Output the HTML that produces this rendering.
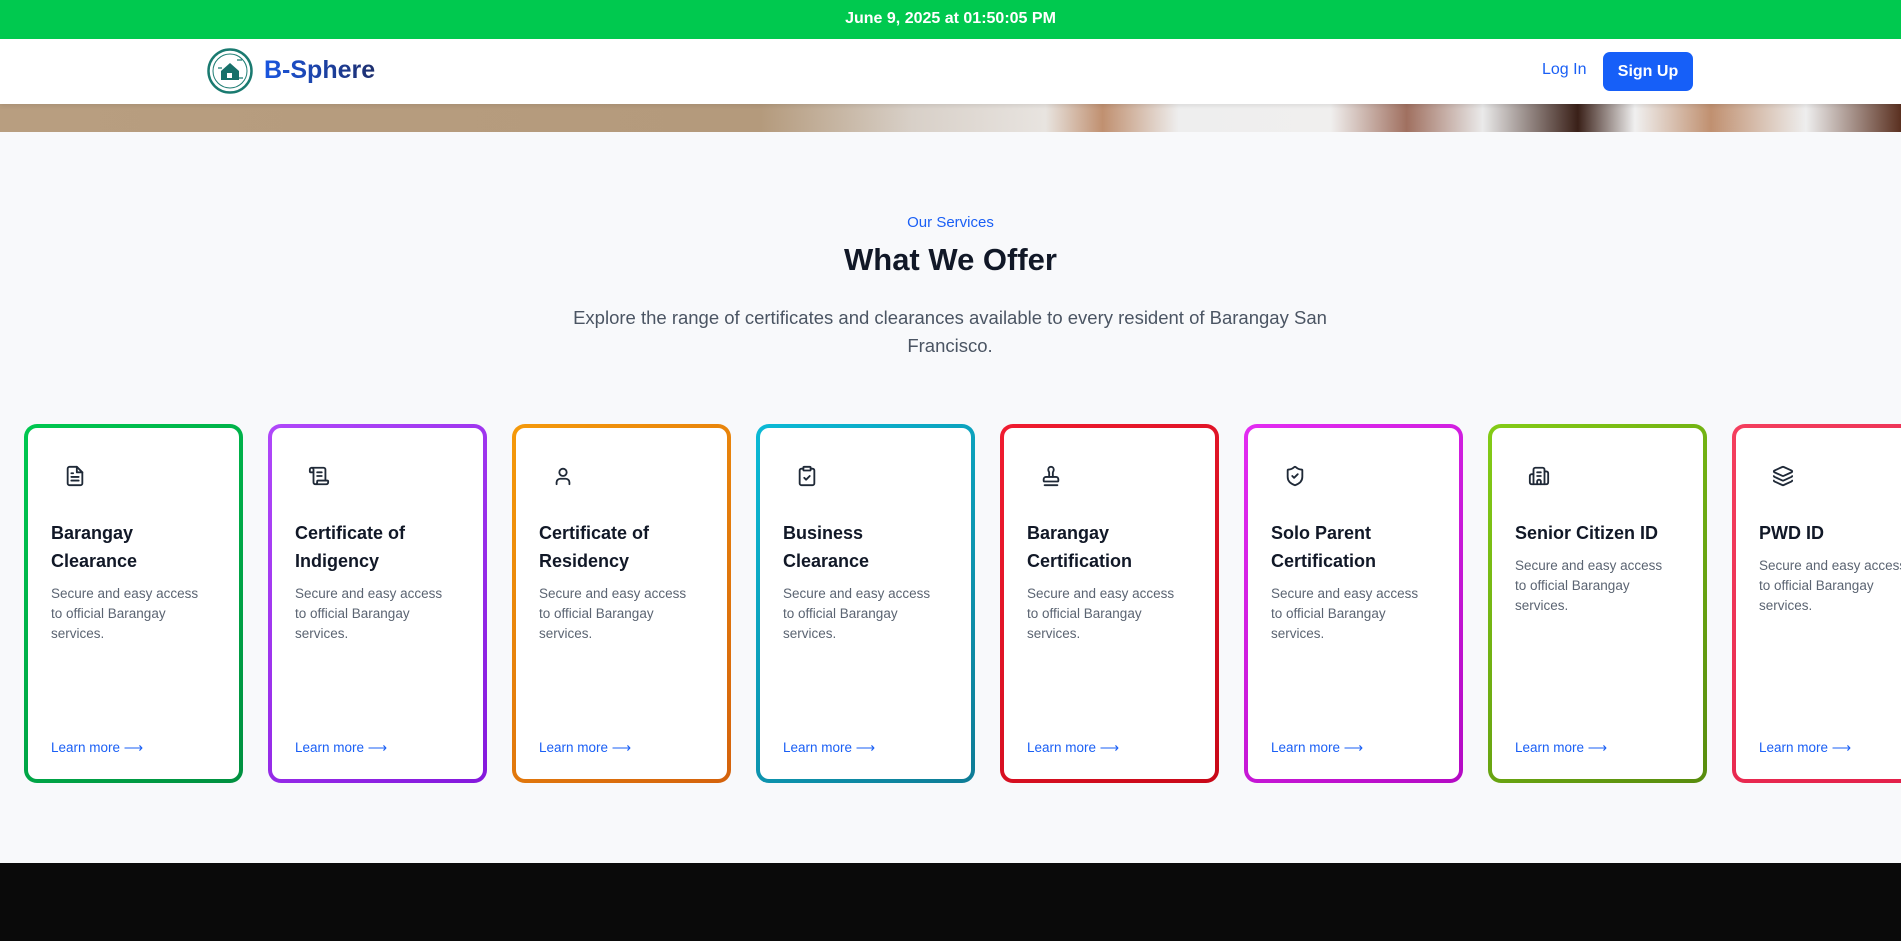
<!DOCTYPE html>
<html><head><meta charset="utf-8"><style>
*{margin:0;padding:0;box-sizing:border-box}
body{width:1901px;height:941px;overflow:hidden;font-family:"Liberation Sans",sans-serif;background:#f8f9fb;position:relative}
.top{position:absolute;left:0;top:0;width:1901px;height:39px;background:#00c94f;color:#fff;font-size:16px;font-weight:bold;text-align:center;line-height:37px}
.hdr{position:absolute;left:0;top:39px;width:1901px;height:65px;background:#fff;box-shadow:0 2px 4px rgba(0,0,0,.08);z-index:2}
.logo{position:absolute;left:207px;top:9px;width:46px;height:46px}
.brand{position:absolute;left:264px;top:17px;font-size:25px;font-weight:bold;background:linear-gradient(90deg,#1a56e0,#1e2f6e);-webkit-background-clip:text;color:transparent}
.login{position:absolute;left:1542px;top:22px;font-size:16px;color:#1a5ff5}
.sign{position:absolute;left:1603px;top:13px;width:90px;height:39px;background:#165ff8;border-radius:7px;color:#fff;font-weight:bold;font-size:16px;text-align:center;line-height:39px}
.hero{position:absolute;left:0;top:104px;width:1901px;height:28px;background:linear-gradient(90deg,#b89e80 0%,#b49a7c 40%,#d8d0c8 48%,#e8e4e0 55%,#c09070 58%,#eee 62%,#f0efee 70%,#a07060 74%,#eaeaea 78%,#3a2018 83%,#f0f0f0 86%,#c09070 90%,#eee 95%,#5a3020 100%)}
.sub{position:absolute;top:214px;width:100%;text-align:center;color:#1a5ff5;font-size:15px}
h1{position:absolute;top:242px;width:100%;text-align:center;font-size:31px;color:#111827}
.p{position:absolute;left:555px;top:304px;width:790px;text-align:center;font-size:18.5px;line-height:28px;color:#4b5563}
.card{position:absolute;top:424px;width:219px;height:359px;border-radius:13px;padding:4px}
.in{width:100%;height:100%;background:#fff;border-radius:9px;position:relative}
.in svg{position:absolute;left:36px;top:37px}
.t{position:absolute;left:23px;top:91px;width:160px;font-size:18px;font-weight:bold;color:#111827;line-height:28px}
.d{position:absolute;left:23px;width:158px;font-size:13.5px;color:#5b6472;line-height:20px}
.l{position:absolute;left:23px;top:312px;font-size:13.5px;color:#1a5ff5}
.foot{position:absolute;left:0;top:863px;width:1901px;height:78px;background:#0a0a0a}
</style></head><body>
<div class="top">June 9, 2025 at 01:50:05 PM</div>
<div class="hdr">
<svg class="logo" viewBox="0 0 46 46"><circle cx="23" cy="23" r="21.5" fill="none" stroke="#1a7a70" stroke-width="2.5"/><circle cx="23" cy="23" r="17" fill="none" stroke="#1a7a70" stroke-width="1"/><path d="M14 23l9-8 9 8v9H14z" fill="#17706a"/><rect x="20" y="25" width="5" height="5" fill="#fff"/><path d="M30 12h5M11 20h4M32 30h4" stroke="#1a7a70" stroke-width="1.2"/></svg>
<div class="brand">B-Sphere</div>
<div class="login">Log In</div>
<div class="sign">Sign Up</div>
</div>
<div class="hero"></div>
<div class="sub">Our Services</div>
<h1>What We Offer</h1>
<div class="p">Explore the range of certificates and clearances available to every resident of Barangay San Francisco.</div>

<div class="card" style="left:24px;background:linear-gradient(135deg,#00c850,#009040)"><div class="in">
<svg width="22" height="22" viewBox="0 0 24 24" fill="none" stroke="#1f2937" stroke-width="2" stroke-linecap="round" stroke-linejoin="round"><path d="M14 2H6a2 2 0 0 0-2 2v16a2 2 0 0 0 2 2h12a2 2 0 0 0 2-2V8z"/><path d="M14 2v6h6M16 13H8M16 17H8M10 9H8"/></svg>
<div class="t">Barangay Clearance</div><div class="d" style="top:156px">Secure and easy access to official Barangay services.</div><div class="l">Learn more ⟶</div></div></div>

<div class="card" style="left:268px;background:linear-gradient(135deg,#b048fa,#8418dc)"><div class="in">
<svg width="22" height="22" viewBox="0 0 24 24" fill="none" stroke="#1f2937" stroke-width="2" stroke-linecap="round" stroke-linejoin="round"><path d="M15 12h-5M15 8h-5M19 17V5a2 2 0 0 0-2-2H4"/><path d="M8 21h12a2 2 0 0 0 2-2v-1a1 1 0 0 0-1-1H11a1 1 0 0 0-1 1v1a2 2 0 1 1-4 0V5a2 2 0 1 0-4 0v2a1 1 0 0 0 1 1h3"/></svg>
<div class="t">Certificate of Indigency</div><div class="d" style="top:156px">Secure and easy access to official Barangay services.</div><div class="l">Learn more ⟶</div></div></div>

<div class="card" style="left:512px;background:linear-gradient(135deg,#f59a0b,#d4620c)"><div class="in">
<svg width="22" height="22" viewBox="0 0 24 24" fill="none" stroke="#1f2937" stroke-width="2" stroke-linecap="round" stroke-linejoin="round"><circle cx="12" cy="8" r="4"/><path d="M19 21v-2a4 4 0 0 0-4-4H9a4 4 0 0 0-4 4v2"/></svg>
<div class="t">Certificate of Residency</div><div class="d" style="top:156px">Secure and easy access to official Barangay services.</div><div class="l">Learn more ⟶</div></div></div>

<div class="card" style="left:756px;background:linear-gradient(135deg,#0bbad6,#0e7c96)"><div class="in">
<svg width="22" height="22" viewBox="0 0 24 24" fill="none" stroke="#1f2937" stroke-width="2" stroke-linecap="round" stroke-linejoin="round"><rect x="8" y="2" width="8" height="4" rx="1"/><path d="M16 4h2a2 2 0 0 1 2 2v14a2 2 0 0 1-2 2H6a2 2 0 0 1-2-2V6a2 2 0 0 1 2-2h2"/><path d="M9 14l2 2 4-4"/></svg>
<div class="t">Business Clearance</div><div class="d" style="top:156px">Secure and easy access to official Barangay services.</div><div class="l">Learn more ⟶</div></div></div>

<div class="card" style="left:1000px;background:linear-gradient(135deg,#f01c30,#c80818)"><div class="in">
<svg width="22" height="22" viewBox="0 0 24 24" fill="none" stroke="#1f2937" stroke-width="2" stroke-linecap="round" stroke-linejoin="round"><path d="M5 22h14M19.27 13.73A2.5 2.5 0 0 0 17.5 13h-11A2.5 2.5 0 0 0 4 15.5V17a1 1 0 0 0 1 1h14a1 1 0 0 0 1-1v-1.5c0-.66-.26-1.3-.73-1.77"/><path d="M14 13V8.5C14 7 15 7 15 5a3 3 0 0 0-6 0c0 2 1 2 1 3.5V13"/></svg>
<div class="t">Barangay Certification</div><div class="d" style="top:156px">Secure and easy access to official Barangay services.</div><div class="l">Learn more ⟶</div></div></div>

<div class="card" style="left:1244px;background:linear-gradient(135deg,#e32cf2,#b40ac4)"><div class="in">
<svg width="22" height="22" viewBox="0 0 24 24" fill="none" stroke="#1f2937" stroke-width="2" stroke-linecap="round" stroke-linejoin="round"><path d="M20 13c0 5-3.5 7.5-7.66 8.95a1 1 0 0 1-.67-.01C7.5 20.5 4 18 4 13V6a1 1 0 0 1 1-1c2 0 4.5-1.2 6.24-2.72a1.17 1.17 0 0 1 1.52 0C14.51 3.81 17 5 19 5a1 1 0 0 1 1 1z"/><path d="M9 12l2 2 4-4"/></svg>
<div class="t">Solo Parent Certification</div><div class="d" style="top:156px">Secure and easy access to official Barangay services.</div><div class="l">Learn more ⟶</div></div></div>

<div class="card" style="left:1488px;background:linear-gradient(135deg,#84cc16,#588c0e)"><div class="in">
<svg width="22" height="22" viewBox="0 0 24 24" fill="none" stroke="#1f2937" stroke-width="2" stroke-linecap="round" stroke-linejoin="round"><path d="M10 12h4M10 8h4M14 21v-3a2 2 0 0 0-4 0v3"/><path d="M6 10H4a2 2 0 0 0-2 2v7a2 2 0 0 0 2 2h16a2 2 0 0 0 2-2V9a2 2 0 0 0-2-2h-2"/><path d="M6 21V5a2 2 0 0 1 2-2h8a2 2 0 0 1 2 2v16"/></svg>
<div class="t" style="width:180px">Senior Citizen ID</div><div class="d" style="top:128px">Secure and easy access to official Barangay services.</div><div class="l">Learn more ⟶</div></div></div>

<div class="card" style="left:1732px;background:linear-gradient(135deg,#f43f5e,#e11d48)"><div class="in">
<svg width="22" height="22" viewBox="0 0 24 24" fill="none" stroke="#1f2937" stroke-width="2" stroke-linecap="round" stroke-linejoin="round"><path d="M12.83 2.18a2 2 0 0 0-1.66 0L2.6 6.08a1 1 0 0 0 0 1.83l8.58 3.91a2 2 0 0 0 1.66 0l8.58-3.9a1 1 0 0 0 0-1.83z"/><path d="M2 12a1 1 0 0 0 .58.91l8.6 3.91a2 2 0 0 0 1.65 0l8.58-3.9A1 1 0 0 0 22 12"/><path d="M2 17a1 1 0 0 0 .58.91l8.6 3.91a2 2 0 0 0 1.65 0l8.58-3.9A1 1 0 0 0 22 17"/></svg>
<div class="t">PWD ID</div><div class="d" style="top:128px">Secure and easy access to official Barangay services.</div><div class="l">Learn more ⟶</div></div></div>

<div class="foot"></div>
</body></html>
